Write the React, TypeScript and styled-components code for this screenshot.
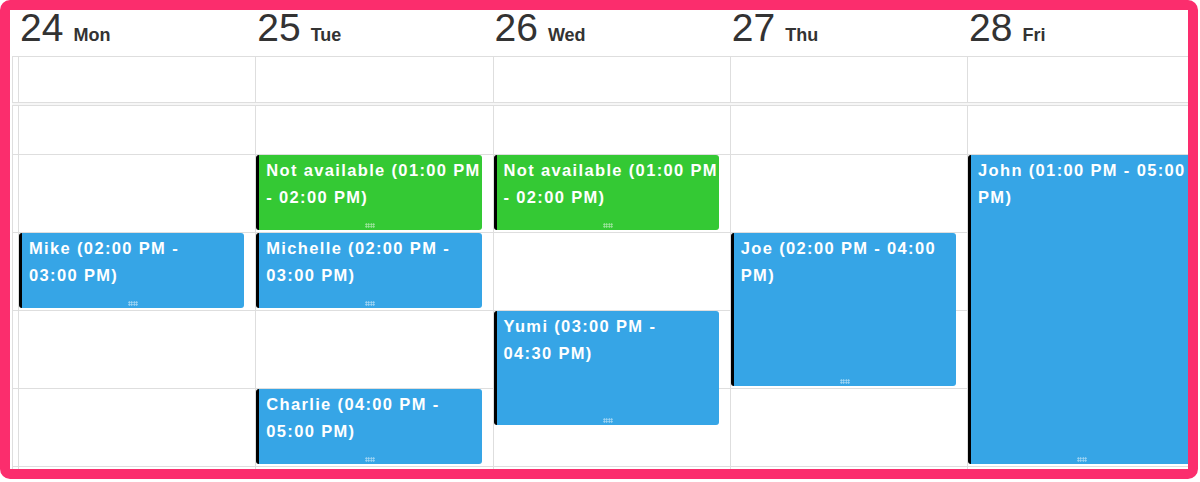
import styled, { createGlobalStyle } from 'styled-components';

const GlobalStyle = createGlobalStyle`
  html, body {
    margin: 0;
    padding: 0;
    background: #fff;
  }
  body {
    font-family: 'Liberation Sans', Arial, sans-serif;
  }
`;

const COLUMNS = '6px repeat(5, 237.25px)';
const HOUR = 78;
const FIRST_HOUR_TOP = 49;
const LINE = '#dedede';

const Frame = styled.div`
  width: 1198px;
  height: 479px;
  box-sizing: border-box;
  border: 10px solid #fb2d6d;
  border-radius: 10px;
  overflow: hidden;
  background: #fff;
  padding-left: 2px;
`;

const HeaderRow = styled.div`
  display: grid;
  grid-template-columns: ${COLUMNS};
  height: 47px;
  box-sizing: border-box;
  border-bottom: 1px solid ${LINE};
`;

const HeaderCell = styled.div`
  display: flex;
  align-items: baseline;
  padding-left: 2px;
  color: #333;
  white-space: nowrap;
`;

const DayNum = styled.span`
  font-size: 39px;
  line-height: 36px;
  font-weight: 400;
`;

const DayName = styled.span`
  margin-left: 10px;
  font-size: 18px;
  font-weight: 700;
`;

const AllDayRow = styled.div`
  display: grid;
  grid-template-columns: ${COLUMNS};
  height: 46px;
  box-sizing: border-box;
  border-bottom: 1px solid ${LINE};
`;

const Cell = styled.div`
  border-left: 1px solid ${LINE};
`;

const Divider = styled.div`
  height: 3px;
  box-sizing: border-box;
  border-bottom: 1px solid ${LINE};
  background: #f6f6f6;
`;

const Body = styled.div`
  display: grid;
  grid-template-columns: ${COLUMNS};
`;

const Column = styled.div`
  position: relative;
  display: flex;
  flex-direction: column;
  border-left: 1px solid ${LINE};
`;

const Slot = styled.div<{ $h: number }>`
  height: ${(p) => p.$h}px;
  flex: none;
  box-sizing: border-box;
  border-bottom: 1px solid ${LINE};
`;

const EventBox = styled.div<{ $color: string }>`
  position: absolute;
  left: 0;
  right: 11px;
  box-sizing: border-box;
  padding: 2px 0 0 7px;
  background: ${(p) => p.$color};
  border-left: 3px solid #000;
  border-radius: 3px;
  color: #fff;
  font-size: 16.5px;
  line-height: 27px;
  font-weight: 700;
  letter-spacing: 1.35px;
  overflow: hidden;
`;

const EventLine = styled.div`
  white-space: nowrap;
`;

const Grip = styled.div`
  position: absolute;
  bottom: 2px;
  left: 50%;
  transform: translateX(-50%);
  width: 10px;
  height: 5px;
  background-image: radial-gradient(circle, rgba(255, 255, 255, 0.6) 0.8px, transparent 1px);
  background-size: 2.5px 2.5px;
`;

type CalEvent = {
  lines: string[];
  start: number;
  end: number;
  color: string;
};

const BLUE = '#36a5e6';
const GREEN = '#34c934';

const days: { num: number; name: string; events: CalEvent[] }[] = [
  {
    num: 24,
    name: 'Mon',
    events: [{ lines: ['Mike (02:00 PM -', '03:00 PM)'], start: 14, end: 15, color: BLUE }],
  },
  {
    num: 25,
    name: 'Tue',
    events: [
      { lines: ['Not available (01:00 PM', '- 02:00 PM)'], start: 13, end: 14, color: GREEN },
      { lines: ['Michelle (02:00 PM -', '03:00 PM)'], start: 14, end: 15, color: BLUE },
      { lines: ['Charlie (04:00 PM -', '05:00 PM)'], start: 16, end: 17, color: BLUE },
    ],
  },
  {
    num: 26,
    name: 'Wed',
    events: [
      { lines: ['Not available (01:00 PM', '- 02:00 PM)'], start: 13, end: 14, color: GREEN },
      { lines: ['Yumi (03:00 PM -', '04:30 PM)'], start: 15, end: 16.5, color: BLUE },
    ],
  },
  {
    num: 27,
    name: 'Thu',
    events: [{ lines: ['Joe (02:00 PM - 04:00', 'PM)'], start: 14, end: 16, color: BLUE }],
  },
  {
    num: 28,
    name: 'Fri',
    events: [{ lines: ['John (01:00 PM - 05:00', 'PM)'], start: 13, end: 17, color: BLUE }],
  },
];

// first row is the partly scrolled 12pm slot
const slotHeights = [49, HOUR, HOUR, HOUR, HOUR, HOUR];

const Slots = () => (
  <>
    {slotHeights.map((h, i) => (
      <Slot key={i} $h={h} />
    ))}
  </>
);

export default function App() {
  return (
    <>
      <GlobalStyle />
      <Frame>
        <HeaderRow>
          <div />
          {days.map((d) => (
            <HeaderCell key={d.num}>
              <DayNum>{d.num}</DayNum>
              <DayName>{d.name}</DayName>
            </HeaderCell>
          ))}
        </HeaderRow>

        <AllDayRow>
          <Cell />
          {days.map((d) => (
            <Cell key={d.num} />
          ))}
        </AllDayRow>
        <Divider />

        <Body>
          <Column>
            <Slots />
          </Column>
          {days.map((d) => (
            <Column key={d.num}>
              <Slots />
              {d.events.map((ev, i) => (
                <EventBox
                  key={i}
                  $color={ev.color}
                  style={{
                    top: FIRST_HOUR_TOP + (ev.start - 13) * HOUR,
                    height: (ev.end - ev.start) * HOUR - 3,
                  }}
                >
                  {ev.lines.map((l) => (
                    <EventLine key={l}>{l}</EventLine>
                  ))}
                  <Grip />
                </EventBox>
              ))}
            </Column>
          ))}
        </Body>
      </Frame>
    </>
  );
}
